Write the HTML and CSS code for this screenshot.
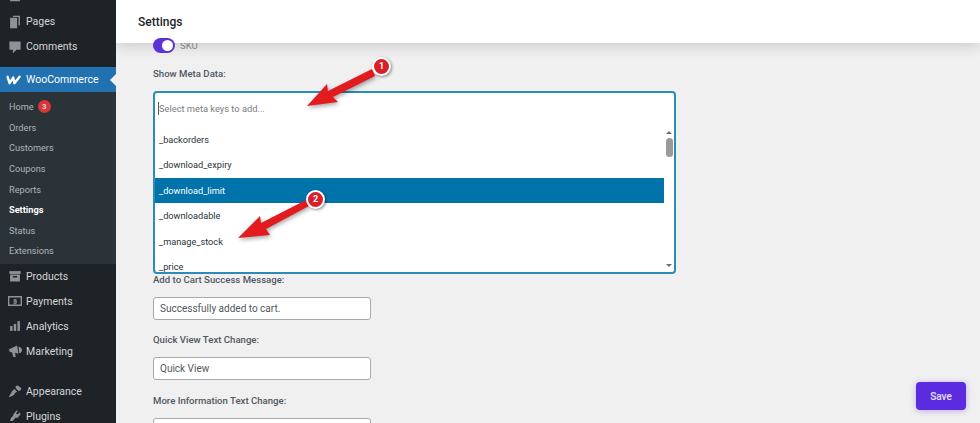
FILE: index.html
```html
<!DOCTYPE html>
<html lang="en">
<head>
    <meta charset="UTF-8">
    <title>Settings</title>
    <link rel="stylesheet" href="styles.css">
</head>
<body>
    <div class="sidebar">
        <ul class="menu">
            <li class="menu-item"><svg class="icon" viewBox="0 0 20 20"><path d="M3 3h4l2 2h8v11H3z"/></svg>Media</li>
            <li class="menu-item"><svg class="icon" viewBox="0 0 20 20"><path d="M7 1h10v14h-2V3H7z"/><path d="M3 4h10v15H3z"/></svg>Pages</li>
            <li class="menu-item"><svg class="icon" viewBox="0 0 20 20"><path d="M2 2h16v12h-6l-5 5v-5H2z"/></svg>Comments</li>
        </ul>
        <ul class="menu active-group">
            <li class="menu-item active"><svg class="icon woo" viewBox="0 0 20 12"><path d="M2 2l2.500 8L9 3l1.500 7L17 2" fill="none" stroke="#ffffff" stroke-width="3" stroke-linejoin="round" stroke-linecap="round"/></svg>WooCommerce</li>
        </ul>
        <ul class="submenu">
            <li>Home <span class="count">3</span></li>
            <li>Orders</li>
            <li>Customers</li>
            <li>Coupons</li>
            <li>Reports</li>
            <li class="current">Settings</li>
            <li>Status</li>
            <li>Extensions</li>
        </ul>
        <ul class="menu">
            <li class="menu-item"><svg class="icon" viewBox="0 0 20 20"><path d="M2 3h16v4H2z"/><path fill-rule="evenodd" d="M3 8h14v10H3zM7 10v2h6v-2z"/></svg>Products</li>
            <li class="menu-item"><svg class="icon" viewBox="0 0 20 20"><path fill-rule="evenodd" d="M0 3h20v14H0zM2 5v10h16V5z"/><path d="M7.500 12h3.500v-1H8V8h1V7h2v1h1.500v1.500H9.500v.5h3v3.500H11v1H9v-1H7.500z"/></svg>Payments</li>
            <li class="menu-item"><svg class="icon" viewBox="0 0 20 20"><path d="M3 10h3.500v7H3z"/><path d="M8.200 7h3.500v10H8.200z"/><path d="M13.500 3H17v14h-3.500z"/></svg>Analytics</li>
            <li class="menu-item"><svg class="icon" viewBox="0 0 20 20"><path d="M1 8l12-6 2 12-5-1.500 1 6H7.500L6 12 3 11.500z"/><path d="M15 4c2.500 0 5 2 5 4.500S18 13 16 13z"/></svg>Marketing</li>
        </ul>
        <ul class="menu lower-group">
            <li class="menu-item"><svg class="icon" viewBox="0 0 20 20"><path d="M11 3l3-1 5 4-1 3-3 1-4-4z"/><path d="M9 7l4 4-3 2-1 2-3 2-5 2 2-4 2-3 1-2z"/></svg>Appearance</li>
            <li class="menu-item"><svg class="icon" viewBox="0 0 20 20"><path d="M12 2l2 1-2.500 3.500 2 1.500L17 5l1 2-3 4c-1 1.500-3 2-4.500 1.500L7 17H3l1-4 3.500-3.500C7 8 8 6.500 9 6z"/></svg>Plugins</li>
        </ul>
    </div>

    <div class="main">
        <div class="topbar">Settings</div>

        <div class="content">
            <div class="toggle-row">
                <span class="toggle"></span>
                <span>SKU</span>
            </div>

            <label class="field-label">Show Meta Data:</label>
            <div class="select-box">
                <div class="search"><span class="caret"></span>Select meta keys to add...</div>
                <div class="list-wrap">
                    <ul class="options">
                        <li>_backorders</li>
                        <li>_download_expiry</li>
                        <li class="selected">_download_limit</li>
                        <li>_downloadable</li>
                        <li>_manage_stock</li>
                        <li>_price</li>
                    </ul>
                    <div class="scrollbar">
                        <span class="arrow-up"></span>
                        <span class="thumb"></span>
                        <span class="arrow-down"></span>
                    </div>
                </div>
            </div>

            <label class="field-label tight">Add to Cart Success Message:</label>
            <input class="text-input" type="text" value="Successfully added to cart.">

            <label class="field-label">Quick View Text Change:</label>
            <input class="text-input" type="text" value="Quick View">

            <label class="field-label">More Information Text Change:</label>
            <input class="text-input" type="text">
        </div>

        <button class="save-btn">Save</button>
    </div>

    <!-- Red annotation arrows on top of the screenshot -->
    <svg class="arrow-layer" viewBox="0 0 980 423">
        <polygon class="arrow" points="307,106 327,84 328,91 372,69 375,76 333,97 338,102"/>
        <polygon class="arrow" points="238,238 260,216 261,223 306,200 309,206 266,229 270,235"/>
    </svg>
    <span class="marker marker-one">1</span>
    <span class="marker marker-two">2</span>
</body>
</html>
```

FILE: styles.css
```css
/* General page */
* {
    box-sizing: border-box;
}

html, body {
    height: 100%;
}

body {
    margin: 0;
    display: flex;
    height: 423px;
    overflow: hidden;
    background-color: #f0f0f1;
    font-family: Roboto, "Liberation Sans", sans-serif;
    font-size: 10px;
    color: #50575e;
}

ul {
    list-style: none;
    margin: 0;
    padding: 0;
}

/* Admin sidebar */
.sidebar {
    width: 116px;
    flex-shrink: 0;
    background-color: #1d2327;
    color: #f0f0f1;
    overflow: hidden;
}

.menu:first-child {
    margin-top: -16px;
}

.active-group {
    margin-top: 8px;
}

.menu-item {
    display: flex;
    align-items: center;
    gap: 4px;
    height: 25px;
    padding-left: 8px;
    font-size: 10.500px;
    color: #d5d7d9;
}

.icon {
    width: 14px;
    height: 14px;
    flex-shrink: 0;
    fill: #8f9398;
}

.icon.woo {
    width: 16px;
    height: 10px;
    margin-left: -2px;
}

.menu-item.active {
    position: relative;
    background-color: #2271b1;
    color: #ffffff;
}

/* little notch pointing at the content */
.menu-item.active::after {
    content: "";
    position: absolute;
    right: 0;
    top: 7px;
    border: 6px solid transparent;
    border-right-color: #f0f0f1;
    border-left-width: 0;
}

.submenu {
    background-color: #2c3338;
    padding: 4.500px 0 2.500px;
}

.submenu li {
    display: flex;
    align-items: center;
    gap: 4px;
    height: 20.600px;
    padding-left: 9px;
    font-size: 9.200px;
    color: #aeb3b8;
}

.submenu .current {
    color: #ffffff;
    font-weight: 700;
}

.count {
    width: 13px;
    height: 13px;
    border-radius: 50%;
    background-color: #d63638;
    color: #ffffff;
    font-size: 8px;
    line-height: 13px;
    text-align: center;
}

.lower-group {
    margin-top: 15px;
}

/* Main area */
.main {
    flex: 1;
    position: relative;
    overflow: hidden;
}

.topbar {
    position: absolute;
    top: 0;
    left: 0;
    right: 0;
    height: 43px;
    padding-left: 22px;
    background-color: #ffffff;
    box-shadow: 0 3px 14px rgba(0, 0, 0, 0.16);
    color: #1d2327;
    font-size: 12px;
    font-weight: 500;
    line-height: 45px;
}

.content {
    padding: 37px 0 0 37px;
}

.toggle-row {
    display: flex;
    align-items: center;
    gap: 5px;
    height: 16px;
    color: #8a8e93;
    font-size: 9.500px;
}

.toggle {
    position: relative;
    width: 22px;
    height: 15px;
    border-radius: 8px;
    background-color: #5b33d6;
}

.toggle::after {
    content: "";
    position: absolute;
    right: 2px;
    top: 2px;
    width: 11px;
    height: 11px;
    border-radius: 50%;
    background-color: #ffffff;
}

.field-label {
    display: block;
    margin-top: 13.500px;
    height: 14px;
    font-size: 9.600px;
    font-weight: 500;
    line-height: 14px;
}

.field-label.tight {
    margin-top: -1px;
}

/* Meta key select */
.select-box {
    display: flex;
    flex-direction: column;
    width: 523px;
    height: 183px;
    margin: 10px 0 0;
    border: 2px solid #2b8cb8;
    border-radius: 4px;
    background-color: #ffffff;
    overflow: hidden;
}

.search {
    display: flex;
    align-items: center;
    flex-shrink: 0;
    height: 34px;
    padding: 0 0 3px 3px;
    color: #787c82;
    font-size: 9.300px;
}

.caret {
    width: 1px;
    height: 13px;
    background-color: #50575e;
}

.list-wrap {
    display: flex;
    flex: 1;
    min-height: 0;
}

.options {
    flex: 1;
    overflow: hidden;
}

.options li {
    height: 25.500px;
    padding-left: 4px;
    color: #2c3338;
    font-size: 9.200px;
    line-height: 25.500px;
}

.options .selected {
    background-color: #0073aa;
    color: #ffffff;
}

.scrollbar {
    display: flex;
    flex-direction: column;
    align-items: center;
    width: 10px;
    padding: 4px 0 5px;
}

.arrow-up, .arrow-down {
    border-left: 3px solid transparent;
    border-right: 3px solid transparent;
}

.arrow-up {
    border-bottom: 3px solid #6e6e6e;
}

.arrow-down {
    margin-top: auto;
    border-top: 3px solid #6e6e6e;
}

.thumb {
    width: 7px;
    height: 19px;
    margin-top: 4px;
    border-radius: 4px;
    background-color: #9a9a9a;
}

/* Text inputs */
.text-input {
    display: block;
    width: 218px;
    height: 23px;
    margin-top: 10px;
    padding: 0 6px;
    border: 1px solid #a7aaad;
    border-radius: 3px;
    background-color: #ffffff;
    color: #50575e;
    font-family: inherit;
    font-size: 10px;
}

/* Save button */
.save-btn {
    position: absolute;
    left: 800px;
    top: 382px;
    width: 50px;
    height: 28px;
    border: none;
    border-radius: 4px;
    background-color: #5b2be0;
    box-shadow: 0 1px 6px rgba(91, 43, 224, 0.35);
    color: #e9e2ff;
    font-family: inherit;
    font-size: 10px;
    font-weight: 500;
}

/* Annotations */
.arrow-layer {
    position: absolute;
    left: 0;
    top: 0;
    width: 980px;
    height: 423px;
    pointer-events: none;
}

.arrow {
    fill: #e21b1f;
    filter: drop-shadow(1px 2px 2px rgba(0, 0, 0, 0.35));
}

.marker {
    position: absolute;
    width: 19px;
    height: 19px;
    border: 2px solid #ffffff;
    border-radius: 50%;
    background-color: #d9202a;
    box-shadow: 1px 1px 3px rgba(0, 0, 0, 0.45);
    color: #ffffff;
    font-size: 9px;
    font-weight: 700;
    line-height: 15px;
    text-align: center;
}

.marker-one {
    left: 372px;
    top: 57px;
}

.marker-two {
    left: 306px;
    top: 190px;
}
```
